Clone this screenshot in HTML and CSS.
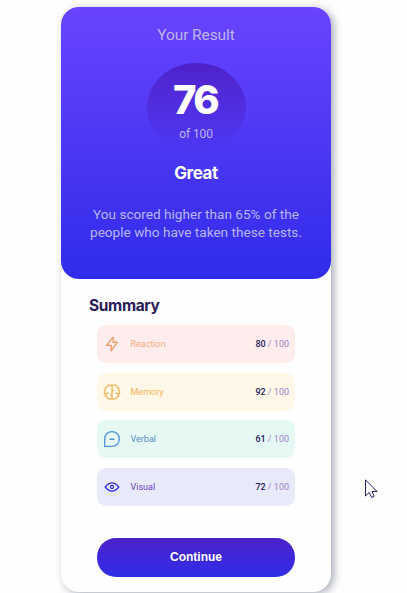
FILE: index.html
```html
<!DOCTYPE html>
<html lang="en">
<head>
<meta charset="utf-8">
<title>Results summary</title>
<link rel="stylesheet" href="styles.css">
</head>
<body>
<main class="card">
  <section class="result">
    <h1 class="title">Your Result</h1>
    <div class="score"><strong class="value">76</strong><span class="total">of 100</span></div>
    <h2 class="grade">Great</h2>
    <p class="message">You scored higher than 65% of the<br><span class="second">people who have taken these tests.</span></p>
  </section>
  <section class="summary">
    <h2 class="heading">Summary</h2>
    <ul class="list">
      <li class="row reaction">
        <svg class="icon" viewBox="0 0 20 20"><path d="M11.300 7.800V1.500L3.300 11.800h5.600v6.700l7.800-10.700Z"/></svg>
        <span class="name">Reaction</span><span class="points"><b>80</b> / 100</span>
      </li>
      <li class="row memory">
        <svg class="icon" viewBox="0 0 20 20"><path d="M10 3v14.500M7 1C5 1 4 2.200 3.700 4 1.800 4.500 1.200 6 1.500 7.800 0 9.500 0 11.500 1.500 13c-.300 2 .700 3.300 2.500 3.500.500 1.700 1.500 2.500 3.300 2.500 1.700 0 2.700-.700 2.700-2.200V3.200C10 1.700 9 1 7 1ZM13 1c2 0 3 1.200 3.300 3 1.900.500 2.500 2 2.200 3.800 1.500 1.700 1.500 3.700 0 5.200.300 2-.700 3.300-2.500 3.500-.500 1.700-1.500 2.500-3.300 2.500-1.700 0-2.700-.700-2.700-2.200V3.200C10 1.700 11 1 13 1ZM2 13c1-1.300 2.200-1.700 3.500-1.300M18 13c-1-1.300-2.200-1.700-3.500-1.300M10 8h2.500M7.500 14H10"/></svg>
        <span class="name">Memory</span><span class="points"><b>92</b> / 100</span>
      </li>
      <li class="row verbal">
        <svg class="icon" viewBox="0 0 20 20"><path d="M7 10.300h6M.800 19.200V10A9.200 9.200 0 1 1 10 19.200Z"/></svg>
        <span class="name">Verbal</span><span class="points"><b>61</b> / 100</span>
      </li>
      <li class="row visual">
        <svg class="icon" viewBox="0 0 20 20"><path d="M1.500 10Q10-.300 18.500 10 10 20.300 1.500 10Z"/><circle cx="10" cy="10" r="1.900"/></svg>
        <span class="name">Visual</span><span class="points"><b>72</b> / 100</span>
      </li>
    </ul>
    <button class="continue">Continue</button>
  </section>
</main>
<svg class="cursor" viewBox="0 0 13 20"><path d="M.5 .8V17L4.200 13.500 6.700 18.500 9.200 17.300 7 12.500H12Z"/></svg>
</body>
</html>
```
FILE: styles.css
```css
* { box-sizing: border-box; }
body {
  margin: 0;
  height: 593px;
  padding: 7px 0 0 61px;
  overflow: hidden;
  background: #fefefe;
  font-family: "Roboto", "Liberation Sans", sans-serif;
}
h1, h2, p, ul { margin: 0; padding: 0; }
.card {
  width: 270px;
  height: 585px;
  border-radius: 18px;
  background: #fefefe;
  box-shadow: 3px 2px 8px rgba(48, 59, 90, .42);
}
.result {
  height: 272px;
  padding-top: 17px;
  border-radius: 18px;
  background: linear-gradient(#6943ff, #2f2ce9);
  text-align: center;
  color: #fff;
}
.title { font-size: 15.5px; line-height: 22px; font-weight: 400; color: #bdb5f5; letter-spacing: -.1px; }
.score {
  display: flex;
  flex-direction: column;
  align-items: center;
  width: 99px;
  height: 88px;
  margin: 17px auto 0;
  padding-top: 16px;
  border-radius: 50%;
  background: linear-gradient(#4d21c9, rgba(37, 33, 201, 0));
}
.value { font: 800 40px/42px "Inter", sans-serif; letter-spacing: -2.700px; padding-right: 2px; }
.total { margin-top: 5px; font-size: 12px; line-height: 16px; color: #bdb5f5; letter-spacing: -.1px; }
.grade { margin-top: 10px; font: 700 17px/24px "Inter", sans-serif; letter-spacing: -.4px; }
.message { margin-top: 20px; font-size: 13.600px; line-height: 18px; color: #b8b5f5; white-space: nowrap; }
.summary { padding: 16px 36px 0; }
.heading { margin-left: -8px; font: 700 15.500px/22px "Inter", sans-serif; letter-spacing: -.35px; color: #2b1c58; }
.list { display: grid; gap: 9.500px; margin-top: 8px; list-style: none; }
.row {
  display: flex;
  align-items: center;
  height: 38.150px;
  padding: 0 6px 0 7px;
  border-radius: 9px;
  font-size: 9px;
}
.icon { width: 16px; height: 16px; fill: none; stroke: currentColor; stroke-width: 1.600; stroke-linejoin: round; overflow: visible; }
.name { margin-left: 10.500px; }
.points { margin-left: auto; color: #9c83cc; }
.points b { color: #26205a; font-weight: 500; }
.reaction { background: #ffeded; color: #e59b68; }
.reaction .name { color: #f4ad80; }
.memory { background: #fff7e8; color: #efb459; }
.verbal { background: #e5f8f4; color: #4e94d7; }
.verbal .name { color: #588bc5; }
.visual { background: #e9eaf9; color: #302ce5; }
.visual .name { color: #6840ca; }
.continue {
  display: block;
  width: 198px;
  height: 39px;
  margin-top: 31.900px;
  padding: 0 0 1px;
  border: 0;
  border-radius: 19px;
  background: linear-gradient(#4d21c9, #2f2ce9);
  color: #fff;
  font: 700 12px "Liberation Sans", sans-serif;
}
.cursor { position: absolute; left: 365px; top: 479px; width: 13px; height: 20px; fill: #fff; stroke: #2b1c58; stroke-width: 1; }
```
